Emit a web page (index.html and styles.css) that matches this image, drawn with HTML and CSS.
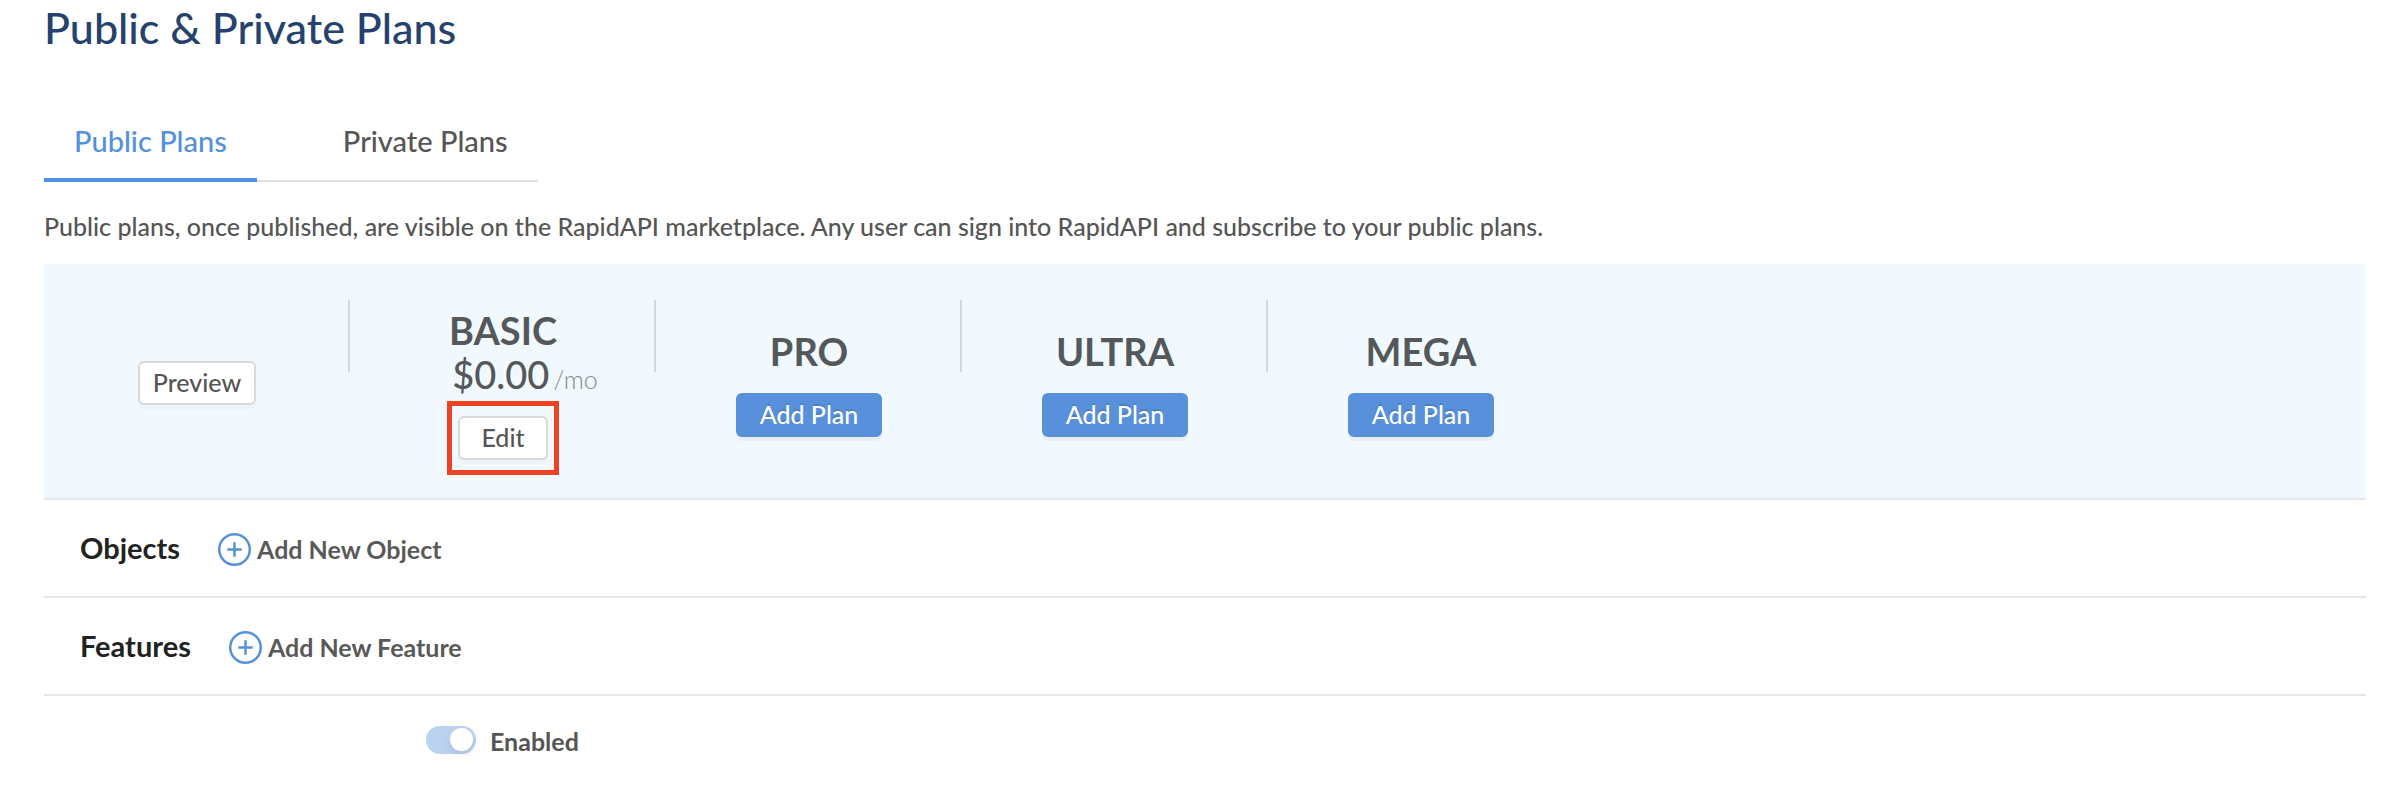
FILE: index.html
```html
<!DOCTYPE html>
<html lang="en">
<head>
  <meta charset="UTF-8" />
  <meta name="viewport" content="width=device-width, initial-scale=1.0"/>
  <title>Public &amp; Private Plans</title>
  <link rel="stylesheet" href="styles.css">
</head>
<body>
  <main class="container">
    <h1>Public &amp; Private Plans</h1>

    <nav class="tabs">
      <a class="tab active" href="#public">Public Plans</a>
      <a class="tab" href="#private">Private Plans</a>
    </nav>

    <p class="description">Public plans, once published, are visible on the RapidAPI marketplace. Any user can sign into RapidAPI and subscribe to your public plans.</p>

    <!-- Plans header -->
    <section class="plans">
      <div class="plan">
        <button class="btn" type="button">Preview</button>
      </div>
      <div class="plan plan-current">
        <h2>BASIC</h2>
        <p class="price">$0.00<span class="period">/mo</span></p>
        <div class="highlight">
          <button class="btn btn-edit" type="button">Edit</button>
        </div>
      </div>
      <div class="plan">
        <h2>PRO</h2>
        <button class="btn btn-primary" type="button">Add Plan</button>
      </div>
      <div class="plan">
        <h2>ULTRA</h2>
        <button class="btn btn-primary" type="button">Add Plan</button>
      </div>
      <div class="plan">
        <h2>MEGA</h2>
        <button class="btn btn-primary" type="button">Add Plan</button>
      </div>
    </section>

    <section class="row">
      <h3>Objects</h3>
      <button class="add" type="button">
        <svg class="icon" viewBox="0 0 32 32" aria-hidden="true">
          <circle cx="16" cy="16" r="14.8" />
          <path d="M16 9v14M9 16h14" />
        </svg>
        Add New Object
      </button>
    </section>

    <section class="row">
      <h3>Features</h3>
      <button class="add" type="button">
        <svg class="icon" viewBox="0 0 32 32" aria-hidden="true">
          <circle cx="16" cy="16" r="14.8" />
          <path d="M16 9v14M9 16h14" />
        </svg>
        Add New Feature
      </button>
    </section>

    <!-- Plan status -->
    <section class="status">
      <input class="switch" type="checkbox" id="enabled" checked />
      <label for="enabled">Enabled</label>
    </section>
  </main>
</body>
</html>
```
FILE: styles.css
```css
* {
  box-sizing: border-box;
}

body {
  margin: 0;
  background: #fff;
  font-family: Lato, sans-serif;
  font-size: 25px;
  font-weight: 500;
  color: #555;
}

.container {
  padding: 0 38px 0 44px;
}

h1, h2, h3, p {
  margin: 0;
}

h1 {
  font-size: 43px;
  line-height: 56px;
  font-weight: 500;
  color: #25426e;
}

.tabs {
  display: flex;
  gap: 56px;
  width: fit-content;
  margin-top: 56px;
  box-shadow: inset 0 -2px #e0e0e0;
}

.tab {
  padding: 12px 30px 20px;
  border-bottom: 4px solid transparent;
  font-size: 29px;
  line-height: 34px;
  color: #555;
  text-decoration: none;
}

.tab.active {
  color: #5590db;
  border-bottom-color: #5590db;
}

.description {
  margin: 28px 0 22px;
  line-height: 32px;
}

.plans {
  display: flex;
  min-height: 236px;
  background: #f1f9ff;
  border-bottom: 2px solid #e7e7e7;
}

.plan {
  position: relative;
  display: flex;
  flex-direction: column;
  align-items: center;
  justify-content: center;
  width: 306px;
  padding-top: 4px;
}

.plan-current {
  padding-top: 20px;
}

/* divider on the right of every plan but the last */
.plan:not(:last-child)::after {
  content: "";
  position: absolute;
  top: 36px;
  right: 0;
  width: 2px;
  height: 72px;
  background: #d6d8da;
}

h2 {
  font-size: 38px;
  line-height: 44px;
  font-weight: 700;
  color: #54585b;
}

.price {
  padding-left: 44px;
  font-size: 38px;
  line-height: 44px;
  color: #54585b;
}

.period {
  margin-left: 4px;
  font-size: 25px;
  font-weight: 300;
  color: #888;
}

.btn {
  height: 44px;
  padding: 0 13px 2px;
  border: 2px solid #d9d9d9;
  border-radius: 6px;
  background: #fff;
  box-shadow: 0 4px 0 rgba(0, 0, 0, 0.02);
  font: inherit;
  color: #555;
  cursor: pointer;
}

.btn-edit {
  width: 90px;
}

.btn-primary {
  margin-top: 20px;
  padding: 0 22px 2px;
  border-color: #5890db;
  background: #5890db;
  box-shadow: 0 4px 0 rgba(0, 0, 0, 0.04);
  color: #fff;
  text-shadow: 0 -2px 0 rgba(0, 0, 0, 0.12);
}

.highlight {
  display: flex;
  padding: 10px 6px;
  border: 5px solid #ee4023;
}

.row {
  display: flex;
  align-items: center;
  gap: 38px;
  height: 98px;
  padding-left: 36px;
  border-bottom: 2px solid #e7e7e7;
}

h3 {
  font-size: 29px;
  line-height: 36px;
  font-weight: 700;
  color: #222;
}

.add {
  display: flex;
  align-items: center;
  gap: 6px;
  padding: 2px 0 0;
  border: none;
  background: none;
  font: inherit;
  font-weight: 700;
  color: #595959;
  cursor: pointer;
}

.icon {
  width: 33px;
  height: 33px;
  fill: none;
  stroke: #5590db;
  stroke-width: 2.4;
}

.status {
  display: flex;
  align-items: center;
  gap: 14px;
  padding: 28px 0 0 382px;
  font-weight: 700;
}

.status label {
  padding-top: 2px;
}

.switch {
  appearance: none;
  width: 50px;
  height: 28px;
  margin: 0;
  padding: 2px 3px;
  border-radius: 14px;
  background: #bbd2f1;
}

.switch::before {
  content: "";
  display: block;
  width: 23px;
  height: 23px;
  border-radius: 50%;
  background: #fff;
  box-shadow: 0 4px 8px rgba(0, 35, 11, 0.1);
}

.switch:checked::before {
  margin-left: auto;
}
```
